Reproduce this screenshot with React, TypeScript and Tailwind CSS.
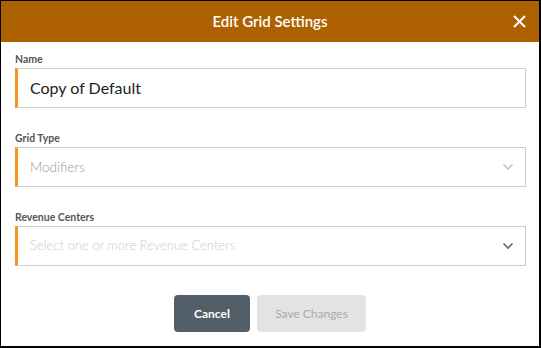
import React from "react";

function Chevron({ color }: { color: string }) {
  return (
    <svg width="12" height="8" viewBox="0 0 12 8" fill="none">
      <path d="M1.5 1.5 L6 6 L10.5 1.5" stroke={color} strokeWidth="1.6" />
    </svg>
  );
}

function Field({
  label,
  children,
}: {
  label: string;
  children: React.ReactNode;
}) {
  return (
    <div className="flex flex-col">
      <div className="text-[10.5px] leading-[12px] font-bold text-[#555] mb-[3px]">{label}</div>
      {children}
    </div>
  );
}

export default function App() {
  return (
    <div
      className="w-[541px] h-[348px] bg-white border-black border-t border-l border-r-2 border-b-2 flex flex-col"
      style={{ fontFamily: "Lato, 'Open Sans', sans-serif" }}
    >
      <div className="h-[41px] bg-[#ad6100] flex items-center justify-center relative shrink-0">
        <span className="text-white text-[15px] font-semibold">Edit Grid Settings</span>
        <svg
          className="absolute right-[13px] top-[14px]"
          width="13"
          height="13"
          viewBox="0 0 13 13"
        >
          <path d="M1 1 L12 12 M12 1 L1 12" stroke="white" strokeWidth="2" />
        </svg>
      </div>
      <div className="flex flex-col gap-[24px] pl-[14px] pr-[13px] pt-[11px]">
        <Field label="Name">
          <div className="h-[40px] border border-[#ccc] border-l-[3px] border-l-[#f7941d] flex items-center pl-[12px] text-[16px] text-[#222]">
            Copy of Default
          </div>
        </Field>
        <Field label="Grid Type">
          <div className="h-[40px] border border-[#ccc] border-l-[3px] border-l-[#f7941d] flex items-center justify-between pl-[12px] pr-[11px] text-[13.5px] font-light text-[#999]">
            <span>Modifiers</span>
            <Chevron color="#c4c4c4" />
          </div>
        </Field>
        <Field label="Revenue Centers">
          <div className="h-[40px] border border-[#ccc] border-l-[3px] border-l-[#f7941d] flex items-center justify-between pl-[12px] pr-[11px] text-[13px] font-light text-[#ccc]">
            <span>Select one or more Revenue Centers</span>
            <Chevron color="#666" />
          </div>
        </Field>
      </div>
      <div className="flex justify-center gap-[7px] mt-[29px]">
        <button className="w-[76px] h-[37px] rounded-[4px] bg-[#525f68] text-white text-[12px] font-bold">
          Cancel
        </button>
        <button className="w-[109px] h-[37px] rounded-[4px] bg-[#e3e3e3] text-[#aaa] text-[12px]">
          Save Changes
        </button>
      </div>
    </div>
  );
}
